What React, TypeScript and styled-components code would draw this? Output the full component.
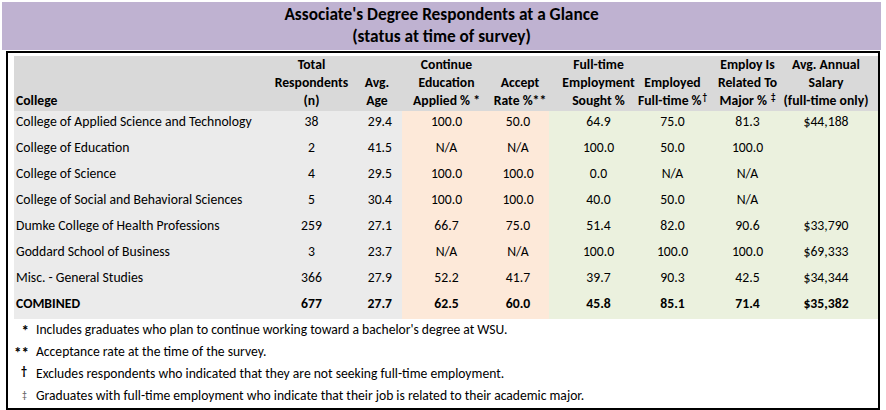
import React from "react";
import styled, { createGlobalStyle } from "styled-components";

const Global = createGlobalStyle`
  html, body { margin: 0; padding: 0; background: #ffffff; }
  body { font-family: "Carlito", "Lato", "Liberation Sans", sans-serif; color: #000; }
`;

const FONT = `"Carlito", "Lato", "Liberation Sans", sans-serif`;

const Page = styled.div`
  width: 886px;
  height: 410px;
  padding: 2px 5px 0 2px;
  box-sizing: border-box;
  display: flex;
  flex-direction: column;
  gap: 1px;
  font-family: ${FONT};
`;

const TitleBar = styled.div`
  height: 48px;
  background: #bfb2d1;
  display: flex;
  flex-direction: column;
  align-items: center;
  justify-content: center;
  font-weight: 700;
  font-size: 17.3px;
  line-height: 22px;
`;

const Panel = styled.div`
  margin-left: 4px;
  width: 874px;
  height: 359px;
  box-sizing: border-box;
  border: 2px solid #000;
  padding: 3px 0 0 6px;
  display: flex;
  flex-direction: column;
`;

const COLS = "251px 93px 44px 89px 58px 99px 49px 101px 80px";

const HeaderGrid = styled.div`
  display: grid;
  grid-template-columns: ${COLS};
  height: 55px;
  background: #d9d9d9;
  font-size: 13.7px;
  font-weight: 700;
`;

const BodyGrid = styled.div`
  display: grid;
  grid-template-columns: ${COLS};
  font-size: 13.7px;
`;

type Zone = "gray" | "orange" | "green";
const BG: Record<Zone, string> = {
  gray: "#ebebeb",
  orange: "#fde9d9",
  green: "#ebf1de",
};

type Align = "start" | "center" | "end";
const flexAlign = (a?: Align) => (a === "start" ? "flex-start" : a === "end" ? "flex-end" : "center");

const HeadCell = styled.div<{ $align?: Align; $pr?: number }>`
  display: flex;
  flex-direction: column;
  justify-content: flex-end;
  align-items: ${(p) => flexAlign(p.$align)};
  padding-left: ${(p) => (p.$align === "start" ? "2px" : "0")};
  padding-right: ${(p) => p.$pr ?? 0}px;
  padding-bottom: 1px;
  box-sizing: border-box;
  line-height: 18px;
  white-space: nowrap;
  min-width: 0;
`;

const Line = styled.span`
  display: block;
`;

const Sup = styled.sup`
  font-size: 9px;
  line-height: 0;
  vertical-align: 5px;
  margin-left: 1px;
`;

const Cell = styled.div<{ $zone: Zone; $align?: Align; $bold?: boolean; $pr?: number }>`
  background: ${(p) => BG[p.$zone]};
  height: 26px;
  display: flex;
  align-items: flex-start;
  justify-content: ${(p) => flexAlign(p.$align)};
  padding-left: ${(p) => (p.$align === "start" ? "2px" : "0")};
  padding-right: ${(p) => p.$pr ?? 0}px;
  box-sizing: border-box;
  line-height: 22px;
  font-weight: ${(p) => (p.$bold ? 700 : 400)};
  white-space: nowrap;
`;

const Notes = styled.div`
  display: grid;
  grid-template-columns: 18px 1fr;
  column-gap: 4px;
  font-size: 13.6px;
  line-height: 22px;
`;

const Mark = styled.span<{ $pr?: number; $size: number; $bold?: boolean; $faint?: boolean; $top?: number }>`
  text-align: right;
  padding-right: ${(p) => p.$pr ?? 0}px;
  font-size: ${(p) => p.$size}px;
  font-weight: ${(p) => (p.$bold ? 700 : 400)};
  color: ${(p) => (p.$faint ? "#555" : "#000")};
  position: relative;
  top: ${(p) => p.$top ?? 0}px;
`;

const NoteText = styled.span``;

type Row = {
  college: string;
  n: string;
  age: string;
  cont: string;
  accept: string;
  sought: string;
  employed: string;
  major: string;
  salary: string;
  bold?: boolean;
};

const rows: Row[] = [
  { college: "College of Applied Science and Technology", n: "38", age: "29.4", cont: "100.0", accept: "50.0", sought: "64.9", employed: "75.0", major: "81.3", salary: "$44,188" },
  { college: "College of Education", n: "2", age: "41.5", cont: "N/A", accept: "N/A", sought: "100.0", employed: "50.0", major: "100.0", salary: "" },
  { college: "College of Science", n: "4", age: "29.5", cont: "100.0", accept: "100.0", sought: "0.0", employed: "N/A", major: "N/A", salary: "" },
  { college: "College of Social and Behavioral Sciences", n: "5", age: "30.4", cont: "100.0", accept: "100.0", sought: "40.0", employed: "50.0", major: "N/A", salary: "" },
  { college: "Dumke College of Health Professions", n: "259", age: "27.1", cont: "66.7", accept: "75.0", sought: "51.4", employed: "82.0", major: "90.6", salary: "$33,790" },
  { college: "Goddard School of Business", n: "3", age: "23.7", cont: "N/A", accept: "N/A", sought: "100.0", employed: "100.0", major: "100.0", salary: "$69,333" },
  { college: "Misc. - General Studies", n: "366", age: "27.9", cont: "52.2", accept: "41.7", sought: "39.7", employed: "90.3", major: "42.5", salary: "$34,344" },
  { college: "COMBINED", n: "677", age: "27.7", cont: "62.5", accept: "60.0", sought: "45.8", employed: "85.1", major: "71.4", salary: "$35,382", bold: true },
];

const notes = [
  { mark: "*", pr: 3, top: 1, size: 15, bold: true, faint: false, text: "Includes graduates who plan to continue working toward a bachelor's degree at WSU." },
  { mark: "**", pr: 6, top: 1, size: 15, bold: true, faint: false, text: "Acceptance rate at the time of the survey." },
  { mark: "†", pr: 5, top: -3, size: 12, bold: true, faint: false, text: "Excludes respondents who indicated that they are not seeking full-time employment." },
  { mark: "‡", pr: 5, top: -1, size: 10, bold: false, faint: true, text: "Graduates with full-time employment who indicate that their job is related to their academic major." },
];

export default function App() {
  return (
    <>
      <Global />
      <Page>
        <TitleBar>
          <Line>Associate's Degree Respondents at a Glance</Line>
          <Line>(status at time of survey)</Line>
        </TitleBar>
        <Panel>
          <HeaderGrid>
            <HeadCell $align="start">
              <Line>College</Line>
            </HeadCell>
            <HeadCell>
              <Line>Total</Line>
              <Line>Respondents</Line>
              <Line>(n)</Line>
            </HeadCell>
            <HeadCell $pr={6}>
              <Line>Avg.</Line>
              <Line>Age</Line>
            </HeadCell>
            <HeadCell>
              <Line>Continue</Line>
              <Line>Education</Line>
              <Line>Applied % *</Line>
            </HeadCell>
            <HeadCell>
              <Line>Accept</Line>
              <Line>Rate %**</Line>
            </HeadCell>
            <HeadCell>
              <Line>Full-time</Line>
              <Line>Employment</Line>
              <Line>Sought %</Line>
            </HeadCell>
            <HeadCell>
              <Line>Employed</Line>
              <Line>
                Full-time %<Sup>†</Sup>
              </Line>
            </HeadCell>
            <HeadCell>
              <Line>Employ Is</Line>
              <Line>Related To</Line>
              <Line>
                Major % <Sup>‡</Sup>
              </Line>
            </HeadCell>
            <HeadCell $pr={24}>
              <Line>Avg. Annual</Line>
              <Line>Salary</Line>
              <Line>(full-time only)</Line>
            </HeadCell>
          </HeaderGrid>
          <BodyGrid>
            {rows.map((r) => (
              <React.Fragment key={r.college}>
                <Cell $zone="gray" $align="start" $bold={r.bold}>{r.college}</Cell>
                <Cell $zone="gray" $bold={r.bold}>{r.n}</Cell>
                <Cell $zone="gray" $align="end" $pr={10} $bold={r.bold}>{r.age}</Cell>
                <Cell $zone="orange" $bold={r.bold}>{r.cont}</Cell>
                <Cell $zone="orange" $bold={r.bold} $pr={4}>{r.accept}</Cell>
                <Cell $zone="green" $bold={r.bold}>{r.sought}</Cell>
                <Cell $zone="green" $bold={r.bold}>{r.employed}</Cell>
                <Cell $zone="green" $bold={r.bold}>{r.major}</Cell>
                <Cell $zone="green" $bold={r.bold} $pr={24}>{r.salary}</Cell>
              </React.Fragment>
            ))}
          </BodyGrid>
          <Notes>
            {notes.map((n) => (
              <React.Fragment key={n.mark}>
                <Mark $pr={n.pr} $size={n.size} $bold={n.bold} $faint={n.faint} $top={n.top}>
                  {n.mark}
                </Mark>
                <NoteText>{n.text}</NoteText>
              </React.Fragment>
            ))}
          </Notes>
        </Panel>
      </Page>
    </>
  );
}
